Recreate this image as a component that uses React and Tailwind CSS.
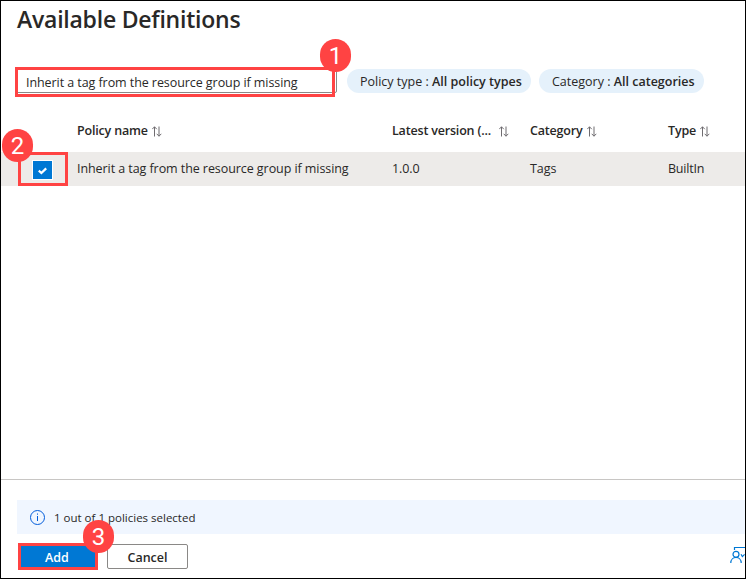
function SortIcon() {
  return (
    <svg width="10" height="11" viewBox="0 0 10 11" fill="none" stroke="#6f6c70" strokeWidth="1" className="shrink-0">
      <path d="M2.5 10.5V0.8M0.2 3.2L2.5 0.8L4.8 3.2" />
      <path d="M7 0.5V10.2M4.7 7.8L7 10.2L9.3 7.8" />
    </svg>
  );
}

function Badge({ children, className }) {
  return (
    <span className={`absolute z-10 flex h-[33px] w-[31px] items-center justify-center rounded-full bg-[#ff4343] pt-px font-['Roboto',sans-serif] text-[24px] leading-none tracking-normal text-white ${className}`}>
      {children}
    </span>
  );
}

function Header({ children, className, gap = 'gap-1' }) {
  return (
    <div className={`flex items-center font-semibold tracking-[-0.18px] ${gap} ${className}`}>
      <span>{children}</span>
      <SortIcon />
    </div>
  );
}

export default function App() {
  return (
    <div className="flex h-[579px] w-[746px] flex-col overflow-hidden border border-black bg-white font-['Open_Sans','Noto_Sans',sans-serif] text-[12.5px] leading-[18px] text-[#292827]">
      <h1 className="mt-[1px] h-[34px] pl-4 text-[23px] font-semibold leading-[34px] tracking-[-0.23px] whitespace-nowrap">
        Available Definitions
      </h1>

      <div className="mt-[31px] flex h-[30px] items-center pl-[14px]">
        <div className="relative h-[30px] w-[322px] shrink-0">
          <div className="flex h-[26px] w-[322px] items-center rounded-[2px] border border-[#8a8886] pt-[6px] pl-[10px] tracking-[-0.07px] whitespace-nowrap">
            Inherit a tag from the resource group if missing
          </div>
          <div className="absolute top-0 left-0 h-[30px] w-[320px] border-3 border-[#ff4343]" />
          <Badge className="-top-[28px] left-[305px]">1</Badge>
        </div>
        <div className="mb-[2px] ml-[10px] flex h-6 w-[184px] shrink-0 items-center rounded-full bg-[#e5f1fb] pt-px pl-[13px] whitespace-pre">
          Policy type : <b className="font-semibold">All policy types</b>
        </div>
        <div className="mb-[2px] ml-2 flex h-6 w-[165px] shrink-0 items-center rounded-full bg-[#e5f1fb] pt-px pl-[13px] whitespace-pre">
          Category : <b className="font-semibold">All categories</b>
        </div>
      </div>

      <div className="mt-[18px] flex h-[37px] items-center pb-[5px] pl-[76px] whitespace-nowrap">
        <Header className="w-[315px]">Policy name</Header>
        <Header className="w-[138px]" gap="gap-2">Latest version (...</Header>
        <Header className="w-[138px]">Category</Header>
        <Header>Type</Header>
      </div>

      <div className="flex h-[34px] items-center bg-[#edebe9] tracking-[-0.07px] whitespace-nowrap">
        <div className="relative ml-[17px] flex h-[34px] w-[50px] shrink-0 items-center border-3 border-[#ff4343] pl-[11px]">
          <span className="mt-[2px] flex h-5 w-[21px] items-center justify-center border border-white bg-[#0078d4]">
            <svg width="9" height="8" viewBox="0 0 9 8" fill="none" stroke="white" strokeWidth="2.2" className="mt-px mr-px">
              <path d="M0.8 3.6L3.4 6L8.2 1.4" />
            </svg>
          </span>
          <Badge className="-top-[26px] -left-[19px]">2</Badge>
        </div>
        <span className="ml-[9px] w-[315px]">Inherit a tag from the resource group if missing</span>
        <span className="w-[138px]">1.0.0</span>
        <span className="w-[138px]">Tags</span>
        <span className="tracking-[-0.2px]">BuiltIn</span>
      </div>

      <div className="flex-1" />

      <footer className="h-[99px] border-t border-[#c8c6c4] pt-5">
        <div className="ml-4 flex h-[34px] items-center bg-[#f0f6ff] pl-3 text-[11.5px]">
          <svg width="17" height="17" viewBox="0 0 17 17" fill="none" stroke="#015cda" className="mr-2">
            <circle cx="8.5" cy="8.5" r="7" />
            <path d="M8.5 7V12M8.5 4.5V5.7" />
          </svg>
          <span className="pt-[2px]">1 out of 1 policies selected</span>
        </div>
        <div className="mt-[9px] flex h-[27px] items-center pl-4">
          <div className="relative h-[27px] w-[82px]">
            <button className="ml-px flex h-[27px] w-20 items-center justify-center border-3 border-[#ff4343] bg-[#0078d4] pt-[2px] pr-[2px] font-semibold text-white">
              Add
            </button>
            <Badge className="-top-[23px] left-[66px]">3</Badge>
          </div>
          <button className="mb-px ml-2 flex h-[25px] w-[81px] items-center justify-center rounded-[2px] border border-[#8a8886] pt-[3px] font-semibold">
            Cancel
          </button>
          <svg width="15" height="17" viewBox="0 0 15 17" fill="none" stroke="#0078d4" strokeWidth="1.2" className="mb-[2px] ml-auto">
            <path d="M4.5 3V0.5H15" />
            <path d="M11 7.2L12.4 9.6L14.6 7.4" />
            <circle cx="6" cy="7.3" r="3" />
            <path d="M0.8 16C0.8 8.6 11.2 8.6 11.2 16" />
          </svg>
        </div>
      </footer>
    </div>
  );
}
